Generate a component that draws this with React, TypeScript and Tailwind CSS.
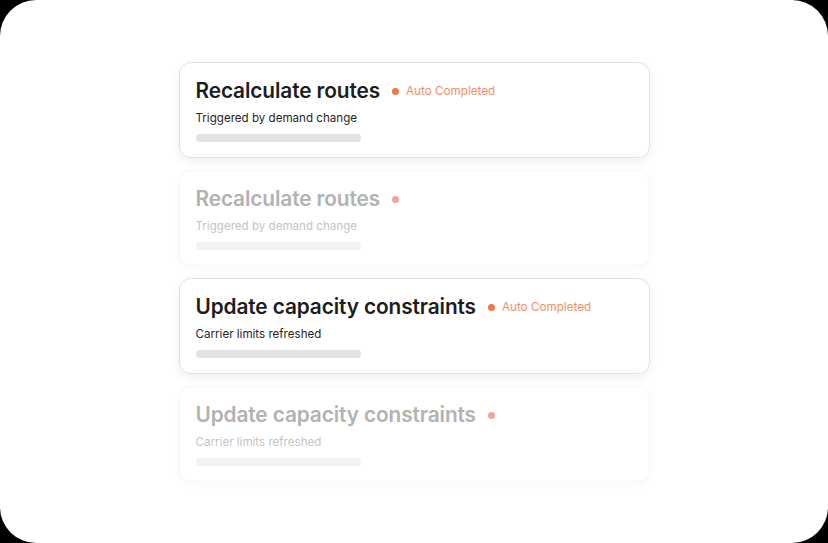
import clsx from 'clsx';

type Task = {
  title: string;
  subtitle: string;
  faded?: boolean;
};

const tasks: Task[] = [
  { title: 'Recalculate routes', subtitle: 'Triggered by demand change' },
  { title: 'Recalculate routes', subtitle: 'Triggered by demand change', faded: true },
  { title: 'Update capacity constraints', subtitle: 'Carrier limits refreshed' },
  { title: 'Update capacity constraints', subtitle: 'Carrier limits refreshed', faded: true },
];

const TaskCard = ({ task }: { task: Task }) => {
  const { title, subtitle, faded } = task;
  return (
    <div
      className={clsx(
        'h-[96px] w-[471px] rounded-[12px] bg-white px-[16px] pt-[14px]',
        faded
          ? 'border border-[#f7f7f7] shadow-[0_2px_10px_rgba(0,0,0,0.035)]'
          : 'border border-[#e3e3e3] shadow-[0_3px_10px_rgba(0,0,0,0.07)]',
      )}
    >
      <div className="flex items-center">
        <h3
          className={clsx(
            'text-[20.8px] font-semibold leading-[28px] tracking-[-0.1px]',
            faded ? 'text-[#b2b2b2]' : 'text-[#1d1d1d]',
          )}
        >
          {title}
        </h3>
        <span
          className={clsx(
            'ml-[12px] h-[7px] w-[7px] rounded-full',
            faded ? 'bg-[#f3a1a1]' : 'bg-[#f0794a]',
          )}
        />
        {!faded && (
          <span className="ml-[7px] text-[11.7px] leading-[16px] text-[#ef9068]">
            Auto Completed
          </span>
        )}
      </div>
      <p
        className={clsx(
          'mt-[5px] text-[11.6px] leading-[16px]',
          faded ? 'text-[#c4c4c4]' : 'text-[#262626]',
        )}
      >
        {subtitle}
      </p>
      <div
        className={clsx(
          'mt-[8px] h-[8px] w-[165px] rounded-full',
          faded ? 'bg-[#f2f2f2]' : 'bg-[#e2e2e2]',
        )}
      />
    </div>
  );
};

export default function App() {
  return (
    <div className="h-[543px] w-[828px] bg-black font-['Inter',sans-serif]">
      <div className="flex h-full w-full flex-col items-center gap-[12px] rounded-[36px] bg-white pt-[62px]">
        {tasks.map((task, i) => (
          <TaskCard key={i} task={task} />
        ))}
      </div>
    </div>
  );
}
